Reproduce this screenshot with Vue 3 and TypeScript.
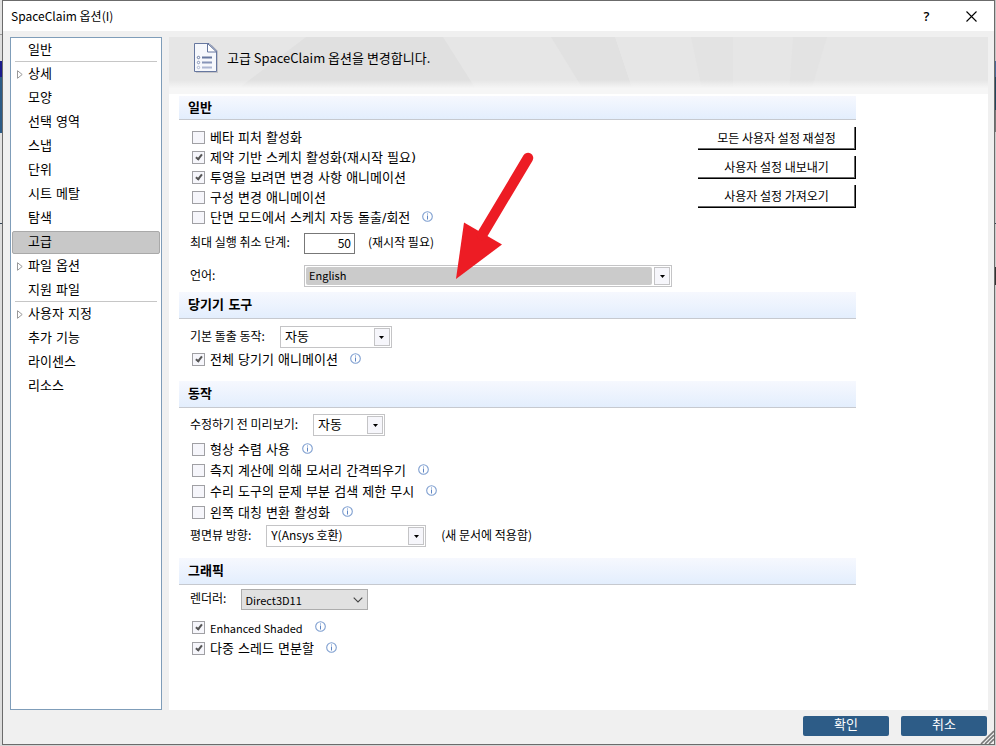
<script setup lang="ts">
import { ref, defineComponent, h } from 'vue'

interface NavItem {
  label: string
  expandable?: boolean
  divider?: boolean
}

interface CheckItem {
  id: string
  label: string
  checked: boolean
  info?: boolean
  latin?: boolean
}

const nav: NavItem[] = [
  { label: '일반', divider: true },
  { label: '상세', expandable: true },
  { label: '모양' },
  { label: '선택 영역' },
  { label: '스냅' },
  { label: '단위' },
  { label: '시트 메탈' },
  { label: '탐색' },
  { label: '고급' },
  { label: '파일 옵션', expandable: true },
  { label: '지원 파일', divider: true },
  { label: '사용자 지정', expandable: true },
  { label: '추가 기능' },
  { label: '라이센스' },
  { label: '리소스' },
]
const current = ref('고급')

const general = ref<CheckItem[]>([
  { id: 'beta', label: '베타 피처 활성화', checked: false },
  { id: 'constraint', label: '제약 기반 스케치 활성화(재시작 필요)', checked: true },
  { id: 'project', label: '투영을 보려면 변경 사항 애니메이션', checked: true },
  { id: 'component', label: '구성 변경 애니메이션', checked: false },
  { id: 'section', label: '단면 모드에서 스케치 자동 돌출/회전', checked: false, info: true },
])
const pull = ref<CheckItem[]>([
  { id: 'pullall', label: '전체 당기기 애니메이션', checked: true, info: true },
])
const behavior = ref<CheckItem[]>([
  { id: 'converge', label: '형상 수렴 사용', checked: false, info: true },
  { id: 'geodesic', label: '측지 계산에 의해 모서리 간격띄우기', checked: false, info: true },
  { id: 'repair', label: '수리 도구의 문제 부분 검색 제한 무시', checked: false, info: true },
  { id: 'lefthand', label: '왼쪽 대칭 변환 활성화', checked: false, info: true },
])
const graphics = ref<CheckItem[]>([
  { id: 'enhanced', label: 'Enhanced Shaded', checked: true, info: true, latin: true },
  { id: 'multi', label: '다중 스레드 면분할', checked: true, info: true },
])

const actions = ['모든 사용자 설정 재설정', '사용자 설정 내보내기', '사용자 설정 가져오기']
const undoSteps = ref('50')

const InfoIcon = defineComponent({
  render: () =>
    h('svg', { width: 11, height: 11, viewBox: '0 0 11 11', 'aria-hidden': 'true' }, [
      h('circle', { cx: 5.5, cy: 5.5, r: 4.8, fill: '#fff', stroke: '#7f9fd0', 'stroke-width': 1.1 }),
      h('path', { d: 'M5 2.5h1v1H5zM5 4.5h1v4H5z', fill: '#5f86c4' }),
    ]),
})
</script>

<template>
  <div class="desktop">
    <div class="behind behind-left"></div>
    <div class="dialog">
      <header class="titlebar">
        <h1>SpaceClaim 옵션(I)</h1>
        <button type="button" class="cap help" aria-label="도움말">?</button>
        <button type="button" class="cap" aria-label="닫기">
          <svg width="11" height="11" viewBox="0 0 11 11"><path d="M.5 .5l10 10M10.5 .5l-10 10" stroke="#000" stroke-width="1.1" /></svg>
        </button>
      </header>

      <div class="body">
        <nav class="side">
          <ul>
            <li v-for="item in nav" :key="item.label" :class="{ divider: item.divider }">
              <button type="button" :class="{ on: item.label === current }" @click="current = item.label">
                <span class="twist">
                  <svg v-if="item.expandable" width="6" height="9" viewBox="0 0 6 9"><path d="M.5 .7v7.6L5.2 4.5z" fill="#fff" stroke="#999" /></svg>
                </span>
                {{ item.label }}
              </button>
            </li>
          </ul>
        </nav>

        <main class="main">
          <div class="banner">
            <svg class="rays" viewBox="0 0 819 57" preserveAspectRatio="none" aria-hidden="true">
              <path d="M137 0H274L310 57H62z" fill="#e0e0e0" />
              <path d="M382 0H446L465 57H417z" fill="#e1e1e1" />
              <path d="M522 0H564V57H534z" fill="#e3e3e3" />
              <path d="M624 0H658L641 57H620z" fill="#e3e3e3" />
            </svg>
            <div class="banner-content">
              <svg width="25" height="31" viewBox="0 0 25 31" aria-hidden="true">
                <path d="M2 2h16l6 6v22H2z" fill="#c4c4c8" />
                <path d="M.5 .5h14.5l7.5 7.5v20.5H.5z" fill="#f6f8fc" stroke="#66779f" />
                <path d="M13.5 .5v8.5h9z" fill="#fff" stroke="#66779f" />
                <path d="M8 14.5h10" stroke="#66779f" stroke-width="2" />
                <path d="M8 19.5h10" stroke="#8795b8" stroke-width="2" />
                <path d="M8 24.5h10" stroke="#adb7d2" stroke-width="2" />
                <g fill="#fff">
                  <circle cx="4.5" cy="14.5" r="1.2" stroke="#66779f" />
                  <circle cx="4.5" cy="19.5" r="1.2" stroke="#8795b8" />
                  <circle cx="4.5" cy="24.5" r="1.2" stroke="#adb7d2" />
                </g>
              </svg>
              <p>고급 SpaceClaim 옵션을 변경합니다.</p>
            </div>
          </div>

          <form class="sections" @submit.prevent>
            <section class="general">
              <h2 class="short">일반</h2>
              <div class="split">
                <div class="fields">
                  <div v-for="c in general" :key="c.id" class="check">
                    <input :id="c.id" v-model="c.checked" type="checkbox" />
                    <label :for="c.id">{{ c.label }}</label>
                    <InfoIcon v-if="c.info" />
                  </div>
                  <div class="grid-row undo">
                    <label for="undo">최대 실행 취소 단계:</label>
                    <div class="inline">
                      <input id="undo" v-model="undoSteps" type="text" class="number" />
                      <span>(재시작 필요)</span>
                    </div>
                  </div>
                  <div class="grid-row lang">
                    <label for="lang">언어:</label>
                    <div class="combo">
                      <span class="fill"></span>
                      <select id="lang" class="latin"><option>English</option></select>
                      <span class="drop"><svg width="5" height="3" viewBox="0 0 5 3"><path d="M0 0h5L2.5 3z" /></svg></span>
                    </div>
                  </div>
                </div>
                <div class="actions">
                  <button v-for="a in actions" :key="a" type="button">{{ a }}</button>
                </div>
              </div>
              <svg class="pointer" width="60" height="132" viewBox="0 0 60 132" aria-hidden="true">
                <path d="M0 128L8 71.500L46 93.500z" fill="#ed1c24" />
                <path d="M26 84L72 7" stroke="#ed1c24" stroke-width="10.500" stroke-linecap="round" />
              </svg>
            </section>

            <section class="pull">
              <h2>당기기 도구</h2>
              <div class="field-row">
                <label for="pullmode">기본 돌출 동작:</label>
                <div class="combo w-medium">
                  <select id="pullmode" class="large"><option>자동</option></select>
                  <span class="drop"><svg width="5" height="3" viewBox="0 0 5 3"><path d="M0 0h5L2.5 3z" /></svg></span>
                </div>
              </div>
              <div v-for="c in pull" :key="c.id" class="check">
                <input :id="c.id" v-model="c.checked" type="checkbox" />
                <label :for="c.id">{{ c.label }}</label>
                <InfoIcon v-if="c.info" />
              </div>
            </section>

            <section class="behavior">
              <h2>동작</h2>
              <div class="field-row">
                <label for="preview">수정하기 전 미리보기:</label>
                <div class="combo w-small">
                  <select id="preview" class="large"><option>자동</option></select>
                  <span class="drop"><svg width="5" height="3" viewBox="0 0 5 3"><path d="M0 0h5L2.5 3z" /></svg></span>
                </div>
              </div>
              <div v-for="c in behavior" :key="c.id" class="check tall">
                <input :id="c.id" v-model="c.checked" type="checkbox" />
                <label :for="c.id">{{ c.label }}</label>
                <InfoIcon v-if="c.info" />
              </div>
              <div class="field-row plan">
                <label for="plan">평면뷰 방향:</label>
                <div class="combo w-large">
                  <select id="plan"><option>Y(Ansys 호환)</option></select>
                  <span class="drop"><svg width="5" height="3" viewBox="0 0 5 3"><path d="M0 0h5L2.5 3z" /></svg></span>
                </div>
                <span class="note">(새 문서에 적용함)</span>
              </div>
            </section>

            <section class="graphics">
              <h2>그래픽</h2>
              <div class="field-row">
                <label for="renderer">렌더러:</label>
                <div class="combo flat">
                  <select id="renderer" class="latin"><option>Direct3D11</option></select>
                  <span class="chevron"><svg width="10" height="6" viewBox="0 0 10 6"><path d="M.7 .7L5 5L9.3 .7" fill="none" stroke="#444" stroke-width="1.1" /></svg></span>
                </div>
              </div>
              <div class="checks">
                <div v-for="c in graphics" :key="c.id" class="check tall">
                  <input :id="c.id" v-model="c.checked" type="checkbox" />
                  <label :for="c.id" :class="{ latin: c.latin }">{{ c.label }}</label>
                  <InfoIcon v-if="c.info" />
                </div>
              </div>
            </section>
          </form>
        </main>
      </div>

      <footer class="footer">
        <button type="button">확인</button>
        <button type="button">취소</button>
      </footer>
      <svg class="grip" width="14" height="14" viewBox="0 0 14 14" aria-hidden="true">
        <path d="M1 14L14 1M5 14L14 5M9 14L14 9" stroke="#777" stroke-width="1.6" />
      </svg>
    </div>
    <div class="behind behind-right"></div>
  </div>
</template>

<style>
body {
  margin: 0;
  background: #d5d5d5;
}
</style>

<style scoped>
.desktop {
  display: grid;
  grid-template-columns: 2px minmax(0, 1fr) 1px;
  min-height: 100vh;
  box-sizing: border-box;
  padding-bottom: 1px;
  font: 12px/16px 'Noto Sans CJK KR', sans-serif;
  color: #000;
}
.behind-left {
  background: linear-gradient(#e2e2e2 34px, #999 34px 35px, #ddd 35px 61px, #1b1b8c 61px 77px, #2d5c87 77px 133px, #e2e2e2 133px 223px, #345 223px 224px, #ddd 224px);
}
.behind-right {
  background: linear-gradient(#c5c5c5 61px, #4a6a98 61px 77px, #23455c 77px 110px, #777 110px 132px, #ccc 132px 223px, #345 223px 224px, #ccc 224px 267px, #333 267px 285px, #ccc 285px);
}
button,
select,
input {
  font: inherit;
  color: inherit;
  margin: 0;
}
.dialog {
  position: relative;
  display: flex;
  flex-direction: column;
  box-sizing: border-box;
  border: 1px solid #6b6b6b;
  background: #f0f0f0;
}
.titlebar {
  display: flex;
  align-items: center;
  height: 30px;
  padding-left: 8px;
  background: #fff;
}
.titlebar h1 {
  flex: 1;
  margin: 0;
  font: inherit;
}
.cap {
  display: flex;
  align-items: center;
  justify-content: center;
  width: 45px;
  height: 28px;
  padding: 0;
  border: 0;
  background: none;
}
.help {
  font-family: 'Open Sans', sans-serif;
  font-size: 13px;
  font-weight: 600;
}
.body {
  flex: 1;
  display: grid;
  grid-template-columns: 152px minmax(0, 1fr);
  gap: 7px;
  padding: 6px 6px 0 7px;
}
.side {
  border: 1px solid #7f9db9;
  background: #fff;
  box-sizing: border-box;
}
.side ul {
  list-style: none;
  margin: 0;
  padding: 1px;
}
.side li {
  position: relative;
  height: 24px;
}
.side li.divider::after {
  content: '';
  position: absolute;
  left: 3px;
  right: 3px;
  bottom: 1px;
  border-bottom: 1px solid #c6c6c6;
}
.side li button {
  display: flex;
  width: 100%;
  height: 23px;
  padding: 0 0 1px 4px;
  border: 1px solid transparent;
  border-radius: 2px;
  background: none;
  align-items: center;
  font: 13px/18px 'DejaVu Sans', 'Noto Sans CJK KR', sans-serif;
}
.side li button.on {
  background: #c8c8c8;
  border-color: #a9a9a9;
}
.twist {
  display: flex;
  width: 11px;
}
.main {
  background: #fff;
}
.banner {
  position: relative;
  height: 57px;
  background: #e6e6e6;
}
.rays {
  position: absolute;
  inset: 0;
  width: 100%;
  height: 100%;
}
.banner::after {
  content: '';
  position: absolute;
  left: 0;
  right: 0;
  bottom: 0;
  height: 14px;
  background: linear-gradient(rgba(246, 246, 246, 0), #f6f6f6 60%);
}
.banner-content {
  position: relative;
  display: flex;
  gap: 8px;
  padding: 6px 0 0 25px;
}
.banner-content p {
  margin: 4px 0 0;
  font-size: 13px;
  line-height: 22px;
}
.sections {
  padding: 2px 132px 40px 10px;
}
section {
  position: relative;
}
h2 {
  margin: 0;
  padding-left: 9px;
  height: 26px;
  border-bottom: 1px solid #c6c9cf;
  background: linear-gradient(#f6f8fe, #e3eefd);
  font: bold 13px/26px 'DejaVu Sans', 'Noto Sans CJK KR', sans-serif;
}
h2.short {
  height: 23px;
  line-height: 24px;
}
.split {
  display: flex;
  gap: 26px;
  padding: 7px 0 5px;
}
.fields {
  flex: 1;
  min-width: 0;
}
.check {
  display: flex;
  align-items: center;
  height: 20px;
  padding-left: 13px;
}
.check.tall {
  height: 21px;
}
.check input {
  appearance: none;
  position: relative;
  width: 13px;
  height: 13px;
  box-sizing: border-box;
  border: 1px solid #a0a0a4;
  background: #f6f6fb;
}
.check input:checked::after {
  content: '';
  position: absolute;
  left: 4px;
  top: 1px;
  width: 2px;
  height: 5px;
  border: solid #555;
  border-width: 0 2px 2px 0;
  transform: rotate(38deg);
}
.check label {
  margin: 0 12px 0 5px;
  font: 13px/20px 'DejaVu Sans', 'Noto Sans CJK KR', sans-serif;
}
.check:not(.tall) label {
  padding-top: 1px;
}
.check svg {
  margin-bottom: 2px;
}
.check label.latin,
.combo select.latin {
  font-size: 11px;
  font-family: 'Noto Sans CJK KR', sans-serif;
}
.grid-row {
  display: grid;
  grid-template-columns: 114px minmax(0, 1fr);
  align-items: center;
  padding-left: 11px;
}
.undo {
  margin-top: 6px;
}
.lang {
  margin-top: 11px;
}
.grid-row label,
.field-row label,
.inline span,
.note {
  padding-bottom: 3px;
}
.inline {
  display: flex;
  align-items: center;
  gap: 13px;
}
.number {
  width: 51px;
  height: 21px;
  box-sizing: border-box;
  padding: 0 3px 2px;
  border: 1px solid #777;
  background: #fff;
  text-align: right;
}
.field-row {
  display: flex;
  align-items: center;
  gap: 15px;
  padding: 7px 0 0 11px;
}
.combo {
  display: grid;
  grid-template-columns: minmax(0, 1fr) 16px;
  gap: 2px;
  height: 22px;
  box-sizing: border-box;
  padding: 1px;
  border: 1px solid #c4c4c6;
  background: #fff;
}
.combo > * {
  grid-row: 1;
}
.combo select {
  grid-column: 1 / -1;
  appearance: none;
  width: 100%;
  height: 18px;
  padding: 0 20px 2px 3px;
  border: 0;
  background: none;
}
.combo select.large {
  font-size: 13px;
}
.fill {
  grid-column: 1;
  border-radius: 2px;
  background: #cbcbcb;
}
.drop {
  grid-column: 2;
  display: flex;
  align-items: center;
  justify-content: center;
  box-sizing: border-box;
  border: 1px solid #c4c4c6;
  background: #f6f6fb;
  pointer-events: none;
}
.w-small {
  width: 72px;
}
.w-medium {
  width: 112px;
}
.w-large {
  width: 160px;
}
.flat {
  width: 127px;
  height: 21px;
  border-color: #adadad;
  background: #e1e1e1;
}
.flat select {
  height: 17px;
  padding: 0 20px 0 2px;
}
.chevron {
  grid-column: 2;
  display: flex;
  align-items: center;
  justify-content: center;
  pointer-events: none;
}
.pull {
  padding-bottom: 12px;
}
.pull .check {
  margin-top: 1px;
}
.behavior {
  padding-bottom: 11px;
}
.behavior .field-row {
  padding-top: 6px;
}
.behavior .field-row + .check {
  margin-top: 3px;
}
.behavior .plan {
  padding-top: 2px;
}
.graphics .field-row {
  padding-top: 4px;
}
.checks {
  padding-top: 7px;
}
.actions {
  display: flex;
  flex-direction: column;
  gap: 6px;
  width: 158px;
}
.actions button {
  height: 23px;
  padding: 0 0 1px;
  border: solid #000;
  border-width: 0 1px 1px 0;
  box-shadow: inset -1px -1px #696969;
  background: #fff;
}
.pointer {
  position: absolute;
  left: 277px;
  top: 55px;
  overflow: visible;
  pointer-events: none;
}
.footer {
  display: flex;
  justify-content: flex-end;
  gap: 12px;
  padding: 6px 7px 8px;
}
.footer button {
  width: 86px;
  height: 20px;
  padding: 0 0 4px;
  border: 0;
  border-radius: 2px;
  background: #2d5c87;
  color: #fff;
  font-size: 13px;
  line-height: 16px;
}
.grip {
  position: absolute;
  right: 0;
  bottom: 0;
}
</style>
